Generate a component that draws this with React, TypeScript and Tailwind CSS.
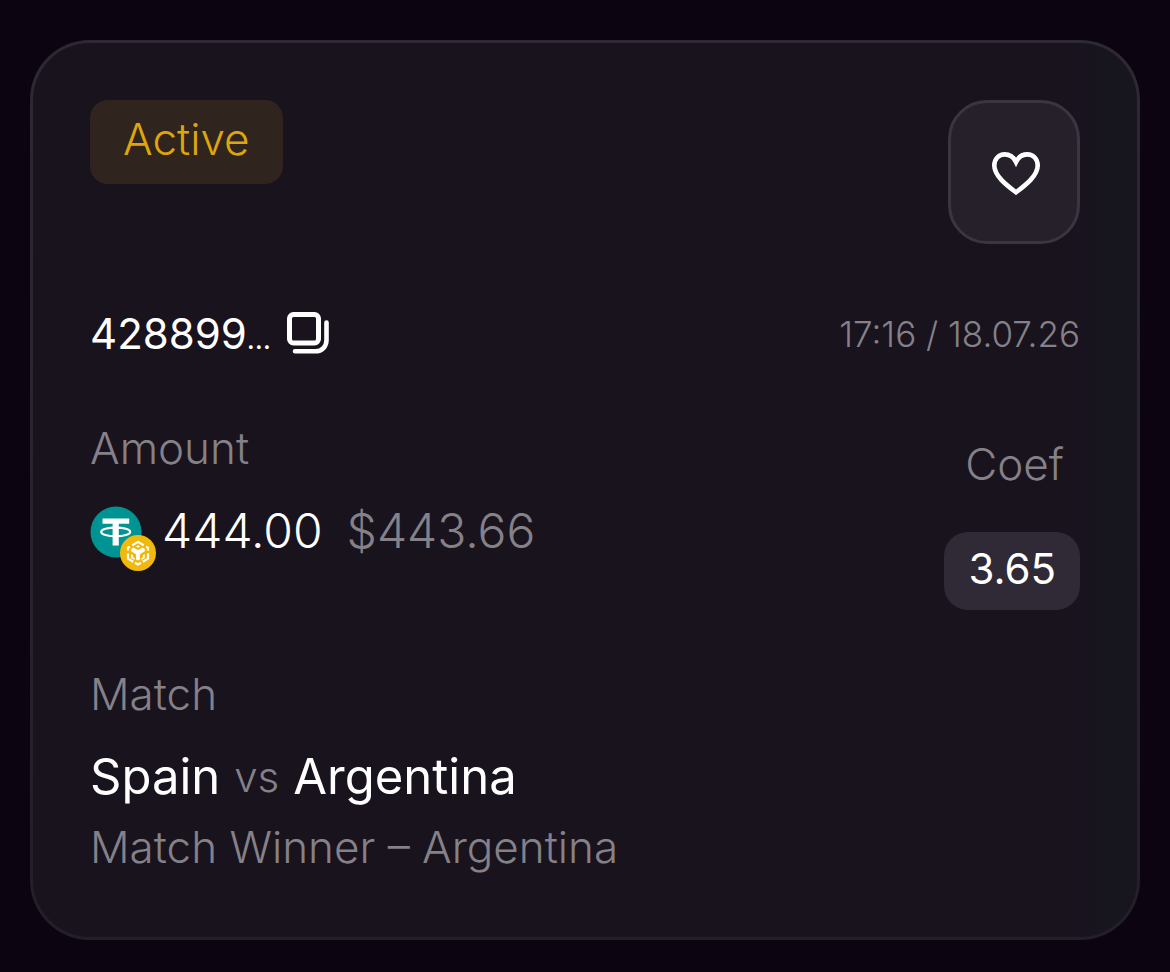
import { useState } from "react";

function HeartIcon() {
  return (
    <svg viewBox="0 0 48 44" className="h-11 w-12" fill="none" stroke="#fff" strokeWidth="4.6" aria-hidden="true">
      <path d="M24 40.3C16.5 34.5 2.3 24.5 2.3 13.5C2.3 7 6.8 2.4 12.6 2.4C17.5 2.4 21.8 5.4 24 10C26.2 5.4 30.5 2.4 35.4 2.4C41.2 2.4 45.7 7 45.7 13.5C45.7 24.5 31.5 34.5 24 40.3Z" />
    </svg>
  );
}

function CopyIcon() {
  return (
    <svg viewBox="0 0 42 42" className="size-[42px]" fill="none" stroke="#fff" strokeWidth="5" strokeLinecap="round" aria-hidden="true">
      <rect x="2.5" y="2.5" width="29" height="28.5" rx="4" />
      <path d="M39.5 10.5V28C39.5 34.5 35 39.3 28.5 39.3H8" strokeWidth="4.6" />
    </svg>
  );
}

function TetherIcon() {
  return (
    <svg viewBox="0 0 52 52" className="size-[52px]" aria-hidden="true">
      <circle cx="26" cy="26" r="25.5" fill="#009393" />
      <path d="M12.5 12.6H39.2V17.8H28.8V39.5H22.6V17.8H12.5Z" fill="#fff" />
      <ellipse cx="25.7" cy="25.9" rx="14.5" ry="4.3" fill="none" stroke="#fff" strokeWidth="2.1" />
    </svg>
  );
}

function BnbIcon() {
  return (
    <svg viewBox="0 0 36 36" className="size-9" aria-hidden="true">
      <circle cx="18" cy="18" r="18" fill="#f0b90b" />
      <g fill="none" stroke="#fff" strokeWidth="2.2">
        <path d="M12.2 10.2L18 6.9L23.8 10.2" />
        <path d="M8 15.4V12.7L10 11.6M28 15.4V12.7L26 11.6" />
        <path d="M8 18.4V23.7L13.2 26.7M28 18.4V23.7L22.8 26.7" />
        <path d="M15 27.7L18 29.4L21 27.7" />
      </g>
      <path d="M11.2 13.9L13.4 12.6L18 15.2L22.6 12.6L24.8 13.9V16.3L19.9 19.2V24.4L18 25.5L16.1 24.4V19.2L11.2 16.3Z" fill="#fff" />
      <path d="M16 11.5L18 10.3L20 11.5L18 12.7ZM11.2 19L13 20V22.2L14.6 23.2V25L11.2 23ZM24.8 19L23 20V22.2L21.4 23.2V25L24.8 23Z" fill="#fff" />
    </svg>
  );
}

export default function App() {
  const [liked, setLiked] = useState(false);
  return (
    <main className="min-h-screen bg-[#0c0511] px-[30px] py-10 font-['Inter',sans-serif] font-light text-[#858188]">
      <article className="rounded-[60px] bg-linear-to-b from-[#2d2833] to-[#231e29] p-[3px]">
        <div className="rounded-[57px] bg-linear-to-r from-[#19131e] from-94% to-[#17151e] to-97% px-[57px] pt-[57px] pb-[60px]">
          <header className="flex items-start justify-between">
            <span className="rounded-[18px] bg-[#2f241e] px-[33px] pt-[9px] pb-[15px] text-[44px] leading-[60px] text-[#dea60a]">Active</span>
            <button
              type="button"
              aria-label="Add to favourites"
              aria-pressed={liked}
              onClick={() => setLiked(!liked)}
              className="flex h-36 w-[132px] items-center justify-center rounded-[39px] border-3 border-[#3a3540] bg-[#25202a] pt-1 pl-1"
            >
              <HeartIcon />
            </button>
          </header>

          <div className="mt-[60px] flex items-center justify-between">
            <div className="flex items-center gap-4 text-[42px] leading-[60px] font-normal text-white">
              <span>428899<span className="text-[28px] leading-none">…</span></span>
              <button type="button" aria-label="Copy bet number" className="pb-[3px]"><CopyIcon /></button>
            </div>
            <time dateTime="2026-07-18T17:16" className="text-[35px] leading-[60px]">17:16 / 18.07.26</time>
          </div>

          <div className="mt-[54px] flex items-start justify-between">
            <div>
              <p className="text-[44px] leading-[60px]">Amount</p>
              <div className="mt-[21px] flex items-center text-[48px] leading-[64px]">
                <span className="relative mr-5 pt-px">
                  <TetherIcon />
                  <span className="absolute top-[30px] left-[30px]"><BnbIcon /></span>
                </span>
                <span className="text-white">444.00</span>
                <span className="ml-6">$443.66</span>
              </div>
            </div>
            <div className="mt-4 flex flex-col items-end text-[44px] leading-[60px]">
              <p className="pr-4">Coef</p>
              <p className="mt-[38px] rounded-[24px] bg-[#2f2a35] px-6 pt-[7px] pb-[11px] text-[42px] font-normal text-white">3.65</p>
            </div>
          </div>

          <div className="mt-[54px]">
            <p className="text-[44px] leading-[60px]">Match</p>
            <p className="mt-[21px] flex items-center gap-[14px] text-[49px] leading-[64px] text-white">
              <span className="font-normal">Spain</span>
              <span className="text-[42px] text-[#858188]">vs</span>
              <span className="font-normal">Argentina</span>
            </p>
            <p className="mt-2 text-[44px] leading-[60px]">Match Winner – Argentina</p>
          </div>
        </div>
      </article>
    </main>
  );
}
